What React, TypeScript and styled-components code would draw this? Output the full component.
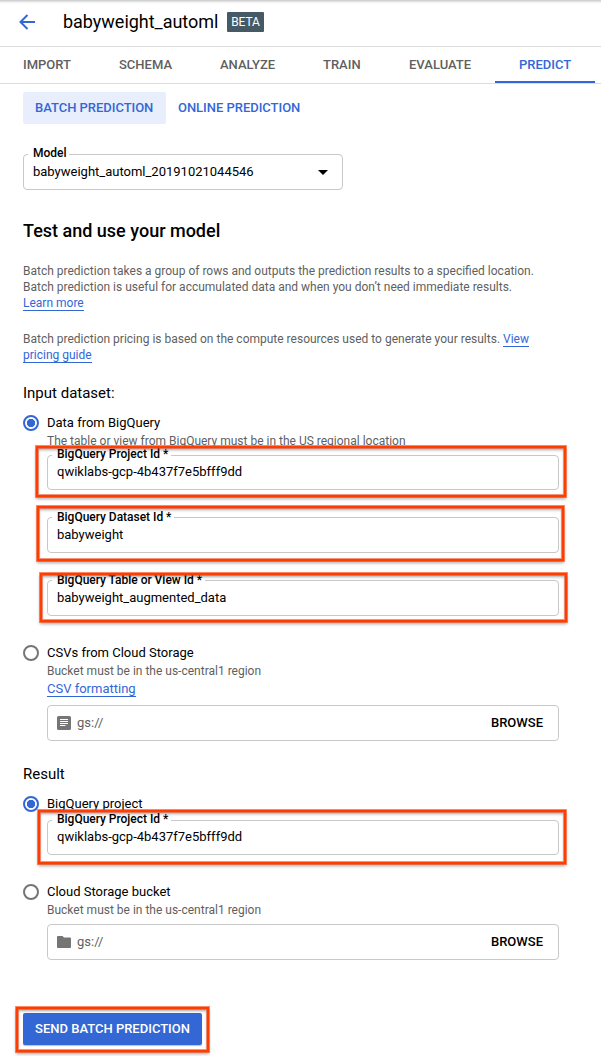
import React from 'react';
import styled, { createGlobalStyle } from 'styled-components';

const Global = createGlobalStyle`
  * { box-sizing: border-box; }
  body { margin: 0; background: #fff; font-family: Roboto, "Liberation Sans", sans-serif; color: #000; }
`;
const Page = styled.div`
  width: 601px;
  height: 1056px;
  overflow: hidden;
  position: relative;
  display: flex;
  flex-direction: column;
`;
const Header = styled.header`
  height: 47px;
  flex: none;
  display: flex;
  align-items: center;
  padding: 0 0 2px 19px;
  border-bottom: 1px solid #dcdcdc;
  background: linear-gradient(#cfcfcf 0, #d4d4d4 1px, #efefef 2px, #fafafa 3px, #fff 5px);
`;
const Title = styled.h1`
  margin: 0 0 0 28px;
  width: 164px;
  font-size: 18px;
  line-height: 24px;
  font-weight: 400;
  letter-spacing: -0.02px;
  white-space: nowrap;
`;
const Badge = styled.span`
  width: 37px;
  height: 20px;
  border-radius: 1px;
  background: #455a64;
  color: #fff;
  font-size: 12px;
  line-height: 20px;
  text-align: center;
  letter-spacing: -0.1px;
`;
const Tabs = styled.nav`
  height: 37px;
  flex: none;
  display: flex;
  border-bottom: 1px solid #dcdcdc;
  padding-left: 23px;
`;
const Tab = styled.a<{ $w: number; $active?: boolean }>`
  width: ${p => p.$w}px;
  height: 36px;
  flex: none;
  font-size: 13px;
  line-height: 36px;
  font-weight: 500;
  white-space: nowrap;
  color: ${p => (p.$active ? '#3367d6' : '#5f5f5f')};
  ${p => p.$active && 'padding-left: 24px; border-bottom: 2px solid #3367d6;'}
`;
const Content = styled.main`
  padding: 8px 42px 0 23px;
  display: flex;
  flex-direction: column;
`;
const Switcher = styled.div`
  display: flex;
  height: 32px;
`;
const Mode = styled.a<{ $active?: boolean }>`
  padding: 0 12px;
  line-height: 32px;
  font-size: 13px;
  font-weight: 500;
  letter-spacing: -0.03px;
  color: #3367d6;
  border-radius: 2px;
  white-space: nowrap;
  ${p => p.$active && 'width: 143px; background: #e8eefb;'}
`;
const Field = styled.div<{ $mt: number; $h?: number; $w?: number; $indent?: number }>`
  position: relative;
  display: flex;
  align-items: center;
  margin: ${p => p.$mt}px 0 0 ${p => p.$indent ?? 24}px;
  width: ${p => p.$w ?? 512}px;
  height: ${p => p.$h ?? 36}px;
  padding: 0 14px ${p => (p.$h === 35 ? 1 : 0)}px 9px;
  border: 1px solid #c8c8c8;
  border-radius: 4px;
  font-size: 13px;
  line-height: 16px;
`;
const FieldLabel = styled.span<{ $top?: number }>`
  position: absolute;
  left: 4px;
  top: ${p => p.$top ?? -9}px;
  padding: 0 3px 0 5px;
  background: #fff;
  font-size: 12px;
  line-height: 14px;
  font-weight: 500;
  letter-spacing: -0.02px;
  white-space: nowrap;
`;
const Placeholder = styled.span`
  flex: 1;
  margin-left: 6px;
  color: #616161;
`;
const Browse = styled.span`
  margin-right: 1px;
  font-weight: 500;
`;
const Value = styled.span`
  flex: 1;
`;
const Heading = styled.h2`
  margin: 29px 0 0;
  font-size: 18px;
  line-height: 24px;
  font-weight: 500;
`;
const Para = styled.p<{ $mt: number }>`
  margin: ${p => p.$mt}px 0 0;
  font-size: 12px;
  line-height: 16px;
  color: #5f5f5f;
`;
const Link = styled.a`
  color: #3367d6;
  border-bottom: 1px solid #3367d6;
`;
const Section = styled.h3<{ $mt: number }>`
  margin: ${p => p.$mt}px 0 0;
  font-size: 15px;
  line-height: 20px;
  font-weight: 400;
`;
const Option = styled.label<{ $mt: number }>`
  display: flex;
  align-items: center;
  gap: 8px;
  height: 16px;
  margin-top: ${p => p.$mt}px;
  font-size: 13px;
  line-height: 16px;
`;
const Radio = styled.span<{ $on?: boolean }>`
  width: 16px;
  height: 16px;
  border-radius: 50%;
  border: 2px solid ${p => (p.$on ? '#3367d6' : '#757575')};
  background: ${p => (p.$on ? 'radial-gradient(circle, #3367d6 3.8px, #fff 4.5px)' : '#fff')};
`;
const Hint = styled.div`
  margin: 2px 0 0 24px;
  font-size: 12px;
  line-height: 16px;
  color: #5f5f5f;
`;
const FormatLine = styled.div`
  margin: 2px 0 0 24px;
  font-size: 13px;
  line-height: 16px;
`;
const Send = styled.button`
  position: relative;
  margin-top: 53px;
  width: 179px;
  height: 32px;
  padding: 0;
  border: 0;
  border-radius: 2px;
  background: #3367d6;
  box-shadow: 0 1px 1px rgba(0, 0, 0, 0.25);
  color: #fff;
  font: 500 13px/32px Roboto, sans-serif;
`;
const Highlight = styled.span<{ $x: number; $y: number; $w: number; $h: number }>`
  position: absolute;
  left: ${p => p.$x}px;
  top: ${p => p.$y}px;
  width: ${p => p.$w}px;
  height: ${p => p.$h}px;
  border: 2px solid #ff3d00;
  outline: 1px solid rgba(255, 61, 0, 0.6);
  box-shadow: 0 2px 3px rgba(0, 0, 0, 0.35), inset 0 0 0 1px rgba(240, 80, 40, 0.6), inset 0 2px 3px rgba(0, 0, 0, 0.35);
  pointer-events: none;
`;

export default function App() {
  return (
    <Page>
      <Global />
      <Header>
        <svg width="16" height="16" viewBox="0 0 16 16" fill="none" stroke="#3367d6" strokeWidth="2">
          <path d="M16 8H2M8.5 1L1.5 8l7 7" />
        </svg>
        <Title>babyweight_automl</Title>
        <Badge>BETA</Badge>
      </Header>
      <Tabs>
        <Tab $w={96}>IMPORT</Tab>
        <Tab $w={101}>SCHEMA</Tab>
        <Tab $w={103}>ANALYZE</Tab>
        <Tab $w={86}>TRAIN</Tab>
        <Tab $w={86}>EVALUATE</Tab>
        <Tab $w={100} $active>PREDICT</Tab>
      </Tabs>
      <Content>
        <Switcher>
          <Mode $active>BATCH PREDICTION</Mode>
          <Mode>ONLINE PREDICTION</Mode>
        </Switcher>
        <Field $mt={30} $w={320} $indent={0}>
          <FieldLabel>Model</FieldLabel>
          <Value>babyweight_automl_20191021044546</Value>
          <svg width="10" height="5" viewBox="0 0 10 5"><path d="M0 0h10L5 5z" /></svg>
        </Field>
        <Heading>Test and use your model</Heading>
        <Para $mt={20}>
          Batch prediction takes a group of rows and outputs the prediction results to a specified location.<br />
          Batch prediction is useful for accumulated data and when you don’t need immediate results.<br />
          <Link>Learn more</Link>
        </Para>
        <Para $mt={20}>
          Batch prediction pricing is based on the compute resources used to generate your results. <Link>View<br />pricing guide</Link>
        </Para>
        <Section $mt={20}>Input dataset:</Section>
        <Option $mt={12}><Radio $on />Data from BigQuery</Option>
        <Hint>The table or view from BigQuery must be in the US regional location</Hint>
        <Field $mt={6} $h={35}>
          <FieldLabel>BigQuery Project Id *</FieldLabel>
          <Value>qwiklabs-gcp-4b437f7e5bfff9dd</Value>
          <Highlight $x={-12} $y={-10} $w={530} $h={51} />
        </Field>
        <Field $mt={27}>
          <FieldLabel $top={-8}>BigQuery Dataset Id *</FieldLabel>
          <Value>babyweight</Value>
          <Highlight $x={-11} $y={-12} $w={527} $h={55} />
        </Field>
        <Field $mt={27}>
          <FieldLabel $top={-8}>BigQuery Table or View Id *</FieldLabel>
          <Value>babyweight_augmented_data</Value>
          <Highlight $x={-8} $y={-8} $w={527} $h={49} />
        </Field>
        <Option $mt={29}><Radio />CSVs from Cloud Storage</Option>
        <Hint>Bucket must be in the us-central1 region</Hint>
        <FormatLine><Link>CSV formatting</Link></FormatLine>
        <Field $mt={8}>
          <svg width="14" height="14" viewBox="0 0 14 14">
            <rect width="14" height="14" rx="1.5" fill="#757575" />
            <path d="M3 3.5h8M3 5.5h8M3 7.5h8M3 9.5h5.5" stroke="#fff" />
          </svg>
          <Placeholder>gs://</Placeholder>
          <Browse>BROWSE</Browse>
        </Field>
        <Section $mt={23}>Result</Section>
        <Option $mt={12}><Radio $on />BigQuery project</Option>
        <Field $mt={8} $h={35}>
          <FieldLabel>BigQuery Project Id *</FieldLabel>
          <Value>qwiklabs-gcp-4b437f7e5bfff9dd</Value>
          <Highlight $x={-10} $y={-11} $w={528} $h={54} />
        </Field>
        <Option $mt={29}><Radio />Cloud Storage bucket</Option>
        <Hint>Bucket must be in the us-central1 region</Hint>
        <Field $mt={6}>
          <svg width="14" height="12" viewBox="0 0 14 12">
            <path d="M1 0h4.5L7 1.5h6a1 1 0 0 1 1 1V11a1 1 0 0 1-1 1H1a1 1 0 0 1-1-1V1a1 1 0 0 1 1-1z" fill="#757575" />
          </svg>
          <Placeholder>gs://</Placeholder>
          <Browse>BROWSE</Browse>
        </Field>
        <Send>
          SEND BATCH PREDICTION
          <Highlight $x={-7} $y={-6} $w={193} $h={45} />
        </Send>
      </Content>
    </Page>
  );
}
